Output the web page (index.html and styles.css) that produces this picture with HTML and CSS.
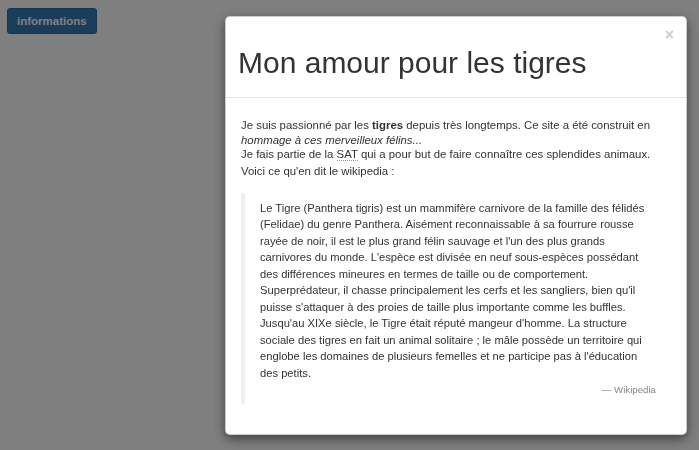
FILE: index.html
```html
<!DOCTYPE html>
<html lang="fr">
<head>
    <meta charset="UTF-8">
    <meta name="viewport" content="width=device-width, initial-scale=1.0">
    <title>Mon amour pour les tigres</title>
    <link rel="stylesheet" href="styles.css">
</head>
<body>
    <button type="button" class="btn btn-primary">informations</button>

    <div class="modal-backdrop"></div>
    <div class="modal">
        <div class="modal-dialog">
            <div class="modal-content">
                <div class="modal-header">
                    <button type="button" class="close">&times;</button>
                    <h1 class="modal-title">Mon amour pour les tigres</h1>
                </div>
                <div class="modal-body">
                    <p>Je suis passionné par les <strong>tigres</strong> depuis très longtemps. Ce site a été construit en <em>hommage à ces merveilleux félins...</em><br>
                    Je fais partie de la <abbr title="Société des Amis des Tigres">SAT</abbr> qui a pour but de faire connaître ces splendides animaux.</p>
                    <p>Voici ce qu'en dit le wikipedia :</p>
                    <blockquote>
                        <p>Le Tigre (Panthera tigris) est un mammifère carnivore de la famille des félidés (Felidae) du genre Panthera. Aisément reconnaissable à sa fourrure rousse rayée de noir, il est le plus grand félin sauvage et l'un des plus grands carnivores du monde. L'espèce est divisée en neuf sous-espèces possédant des différences mineures en termes de taille ou de comportement. Superprédateur, il chasse principalement les cerfs et les sangliers, bien qu'il puisse s'attaquer à des proies de taille plus importante comme les buffles. Jusqu'au XIXe siècle, le Tigre était réputé mangeur d'homme. La structure sociale des tigres en fait un animal solitaire ; le mâle possède un territoire qui englobe les domaines de plusieurs femelles et ne participe pas à l'éducation des petits.</p>
                        <footer>Wikipedia</footer>
                    </blockquote>
                </div>
            </div>
        </div>
    </div>
</body>
</html>
```

FILE: styles.css
```css
body {
    font-family: "Liberation Sans", Arial, sans-serif;
    font-size: 11.4px;
    line-height: 14.7px;
    color: #333;
    margin: 0;
    padding: 8px 7px;
    background-color: #fff;
}
.btn {
    font-family: inherit;
    font-size: 11.5px;
    font-weight: bold;
    line-height: 15px;
    padding: 4.5px 9px;
    border-radius: 3px;
    border: 1px solid transparent;
    cursor: pointer;
}
.btn-primary {
    color: #fff;
    background-color: #337ab7;
    border-color: #2e6da4;
}
.modal-backdrop {
    position: fixed;
    top: 0;
    right: 0;
    bottom: 0;
    left: 0;
    background-color: #000;
    opacity: 0.5;
}
.modal {
    position: fixed;
    top: 0;
    right: 0;
    bottom: 0;
    left: 0;
    overflow: hidden;
}
.modal-dialog {
    width: 462px;
    margin: 16px 0 0 225px;
}
.modal-content {
    background-color: #fff;
    border: 1px solid rgba(0,0,0,0.2);
    border-radius: 5px;
    box-shadow: 0 4px 12px rgba(0,0,0,0.5);
}
.modal-header {
    padding: 12px;
    border-bottom: 1px solid #e5e5e5;
}
.modal-title {
    margin: 17px 0 6px;
    font-size: 30px;
    font-weight: 500;
    line-height: 1.1;
}
.close {
    float: right;
    margin-top: -2px;
    padding: 0;
    border: 0;
    background: transparent;
    font-family: inherit;
    font-size: 16px;
    font-weight: bold;
    line-height: 1;
    color: #000;
    opacity: 0.2;
    cursor: pointer;
}
.modal-body {
    padding: 20px 15px 15px;
}
.modal-body p {
    margin: 0 0 2px;
}
abbr[title] {
    text-decoration: none;
    border-bottom: 1px dotted #999;
}
blockquote {
    margin: 14px 0 15px;
    padding: 7px 15px 8px;
    border-left: 4px solid #eee;
    font-size: 11.2px;
    line-height: 16.5px;
}
blockquote p {
    margin: 0;
}
blockquote footer {
    text-align: right;
    font-size: 9.7px;
    line-height: 13px;
    color: #888;
}
blockquote footer::before {
    content: "\2014 \00A0";
}
```
